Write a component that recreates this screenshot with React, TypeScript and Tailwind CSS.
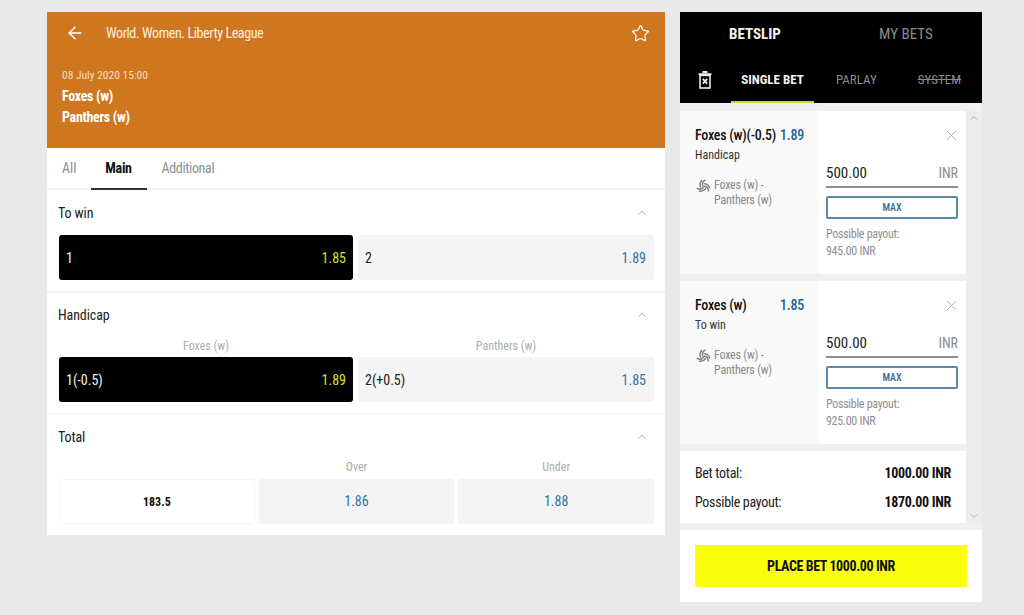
import { ArrowLeft, ChevronDown, ChevronUp, Star, X } from "lucide-react";

function Ball() {
  const wedge = (
    <>
      <path d="M7.4 7.4C6.4 5.2 7.2 2.6 9.6 1.2" />
      <path d="M4.8 8.6C3.8 6 4.4 3.4 6 1.6" />
    </>
  );
  return (
    <svg width="15" height="15" viewBox="0 0 16 16" fill="none" stroke="currentColor" strokeWidth="1.5" strokeLinecap="round" className="mt-[1px] ml-[1px] shrink-0 text-[#7c7c7c]">
      <g>{wedge}</g>
      <g transform="rotate(120 8 8)">{wedge}</g>
      <g transform="rotate(240 8 8)">{wedge}</g>
    </svg>
  );
}

function SectionHead({ title, pb }: { title: string; pb: string }) {
  return (
    <div className={`flex items-center justify-between pl-[11px] pr-[16px] ${pb}`}>
      <span className="text-[14px] leading-[20px] tracking-[-0.1px] text-[#222]">{title}</span>
      <ChevronUp size={14} strokeWidth={1.25} className="text-[#999]" />
    </div>
  );
}

function Odd({ label, value, active }: { label: string; value: string; active?: boolean }) {
  return (
    <div
      className={`flex h-[45px] items-center justify-between rounded-[3px] pl-[7px] pt-[1px] text-[14px] ${
        active ? "w-[294px] shrink-0 bg-black pr-[7px] text-[#f1f1f1]" : "flex-1 bg-[#f4f4f4] pr-2 text-[#222]"
      }`}
    >
      <span>{label}</span>
      <span className={active ? "text-[#d6e22f]" : "text-[#31719f]"}>{value}</span>
    </div>
  );
}

function Slip({ title, odd, market, payout }: { title: string; odd: string; market: string; payout: string }) {
  return (
    <div className="flex h-[163px] bg-white">
      <div className="w-[139px] bg-[#f9f9f9] pl-[15px] pr-[15px] pt-[15px]">
        <div className="flex justify-between whitespace-nowrap text-[14px] font-medium leading-[18px] tracking-[-0.25px] text-[#111]">
          <span>{title}</span>
          <span className="text-[#1d6296]">{odd}</span>
        </div>
        <div className="mt-[2px] text-[12px] leading-[18px] text-[#333]">{market}</div>
        <div className="mt-[14px] flex gap-[3px]">
          <Ball />
          <span className="text-[12px] leading-[15px] tracking-[-0.2px] text-[#8a8a8a]">
            Foxes (w) -<br />Panthers (w)
          </span>
        </div>
      </div>
      <div className="flex-1 pl-[7px] pr-2 pt-[16px]">
        <div className="flex justify-end">
          <X size={17} strokeWidth={1.25} className="-mr-[2px] text-[#a8a8a8]" />
        </div>
        <div className="mt-[19px] flex h-[25px] items-center justify-between border-b-2 border-[#8c8f91] pb-[3px]">
          <span className="text-[15px] text-[#222]">500.00</span>
          <span className="text-[14px] text-[#8a8a8a]">INR</span>
        </div>
        <div className="mt-[8px] flex h-[23px] items-center justify-center rounded-[2px] border-2 border-[#5d89a6] text-[10px] font-medium text-[#2f6a92]">
          MAX
        </div>
        <div className="mt-[7px] text-[12px] leading-[17px] tracking-[-0.3px] text-[#8f8f8f]">
          Possible payout:<br />{payout}
        </div>
      </div>
    </div>
  );
}

export default function App() {
  return (
    <div className="flex h-[615px] w-[1024px] items-start gap-[15px] overflow-hidden bg-[#e9e9e9] pl-[47px] pt-3 [font-family:'Roboto_Condensed','Roboto','Liberation_Sans',sans-serif] [font-stretch:75%]">
      {/* Left panel */}
      <div className="flex h-[523px] w-[618px] flex-col bg-white">
        <div className="h-[136px] bg-[#cf771f] pl-[15px] pr-[15px] text-white">
          <div className="flex h-[42px] items-center">
            <ArrowLeft size={20} strokeWidth={1.75} className="mr-[21px] ml-[3px]" />
            <span className="flex-1 text-[14px] tracking-[-0.4px] text-[#fbeee0]">World. Women. Liberty League</span>
            <Star size={19} strokeWidth={1.5} />
          </div>
          <div className="mt-[14px] text-[11.5px] leading-[14px] text-[#f6dfc5]">08 July 2020 15:00</div>
          <div className="mt-[4px] text-[14px] font-bold leading-[21px] tracking-[-0.3px]">Foxes (w)</div>
          <div className="text-[14px] font-bold leading-[21px] tracking-[-0.3px]">Panthers (w)</div>
        </div>

        <div className="flex h-[42px] items-stretch border-b-2 border-[#f3f3f3] pl-[15px] text-[14px]">
          <span className="flex items-center text-[#8b8f94]">All</span>
          <span className="relative ml-[14px] flex w-[56px] items-center justify-center font-bold tracking-[-0.3px] text-[#111]">
            Main
            <span className="absolute inset-x-0 -bottom-[2px] h-[2px] bg-[#333]" />
          </span>
          <span className="ml-[15px] flex items-center tracking-[-0.35px] text-[#8b8f94]">Additional</span>
        </div>

        <div className="h-[103px] border-b-2 border-[#f0f0f0] pt-[13px]">
          <SectionHead title="To win" pb="pb-[12px]" />
          <div className="flex gap-[5px] pl-[12px] pr-[11px]">
            <Odd label="1" value="1.85" active />
            <Odd label="2" value="1.89" />
          </div>
        </div>

        <div className="h-[122px] border-b-2 border-[#f6f6f6] pt-[12px]">
          <SectionHead title="Handicap" pb="pb-[12px]" />
          <div className="flex gap-[5px] pl-[12px] pr-[11px] text-center text-[12px] leading-[18px] text-[#adadad]">
            <span className="w-[294px] shrink-0">Foxes (w)</span>
            <span className="flex-1">Panthers (w)</span>
          </div>
          <div className="flex gap-[5px] pl-[12px] pr-[11px] pt-[2px]">
            <Odd label="1(-0.5)" value="1.89" active />
            <Odd label="2(+0.5)" value="1.85" />
          </div>
        </div>

        <div className="pt-[12px]">
          <SectionHead title="Total" pb="pb-[10px]" />
          <div className="grid grid-cols-3 gap-x-[4px] pl-[12px] pr-[11px] text-[12px] text-[#adadad]">
            <span />
            <span className="pb-[2px] text-center leading-[20px]">Over</span>
            <span className="pb-[2px] text-center leading-[20px]">Under</span>
            <div className="flex h-[45px] items-center justify-center rounded-[3px] border border-[#f6f6f6] text-[12px] font-bold text-[#111]">183.5</div>
            <div className="flex h-[45px] items-center justify-center rounded-[3px] bg-[#f4f4f4] text-[14px] text-[#31719f]">1.86</div>
            <div className="flex h-[45px] items-center justify-center rounded-[3px] bg-[#f4f4f4] text-[14px] text-[#31719f]">1.88</div>
          </div>
        </div>
      </div>

      {/* Right panel */}
      <div className="flex w-[302px] flex-col bg-[#f0f0f0]">
        <div className="h-[91px] bg-black">
          <div className="flex h-[44px] items-center text-[15px]">
            <span className="w-[150px] pl-[49px] font-bold text-[#f3f3f3]">BETSLIP</span>
            <span className="pl-[49px] text-[#8a8a8a]">MY BETS</span>
          </div>
          <div className="flex h-[47px] items-stretch pl-[18px] text-[13px]">
            <svg width="14" height="18" viewBox="0 0 14 18" className="mt-[15px] text-[#eee]" fill="none" stroke="currentColor">
              <path d="M4.5 1h5M0.5 3.2h13" strokeWidth="1.8" />
              <rect x="2" y="4.4" width="10" height="12.6" strokeWidth="1.6" />
              <path d="M4.8 7.8l4.4 4.8M9.2 7.8l-4.4 4.8" strokeWidth="1.8" />
            </svg>
            <span className="ml-[19px] flex w-[83px] items-center justify-center border-b-2 border-[#cfd83a] pt-[2px] font-bold text-[#f3f3f3]">SINGLE BET</span>
            <span className="ml-[22px] flex items-center pt-[1px] text-[#8a8a8a]">PARLAY</span>
            <span className="ml-[41px] flex items-center pt-[1px] text-[#8a8a8a] line-through">SYSTEM</span>
          </div>
        </div>

        <div className="flex h-[420px] pt-[8px]">
          <div className="flex w-[286px] flex-col gap-[7px]">
            <Slip title="Foxes (w)(-0.5)" odd="1.89" market="Handicap" payout="945.00 INR" />
            <Slip title="Foxes (w)" odd="1.85" market="To win" payout="925.00 INR" />
            <div className="h-[72px] bg-white pl-[15px] pr-[15px] pt-[8px] text-[14px] leading-[29px] tracking-[-0.3px] text-[#222]">
              <div className="flex justify-between">
                <span>Bet total:</span>
                <span className="font-bold text-[#111]">1000.00 INR</span>
              </div>
              <div className="flex justify-between">
                <span>Possible payout:</span>
                <span className="font-bold text-[#111]">1870.00 INR</span>
              </div>
            </div>
          </div>
          <div className="flex w-[16px] flex-col items-center justify-between bg-[#ececec] pt-[1px] text-[#b5b5b5]">
            <ChevronUp size={12} strokeWidth={2} />
            <ChevronDown size={12} strokeWidth={2} className="mb-[1px]" />
          </div>
        </div>

        <div className="mt-[7px] h-[72px] bg-white px-[15px] pt-[15px]">
          <div className="flex h-[42px] w-[272px] items-center justify-center rounded-[1px] bg-[#fbff0e] text-[14px] font-bold tracking-[-0.4px] text-[#111]">
            PLACE BET 1000.00 INR
          </div>
        </div>
      </div>
    </div>
  );
}
